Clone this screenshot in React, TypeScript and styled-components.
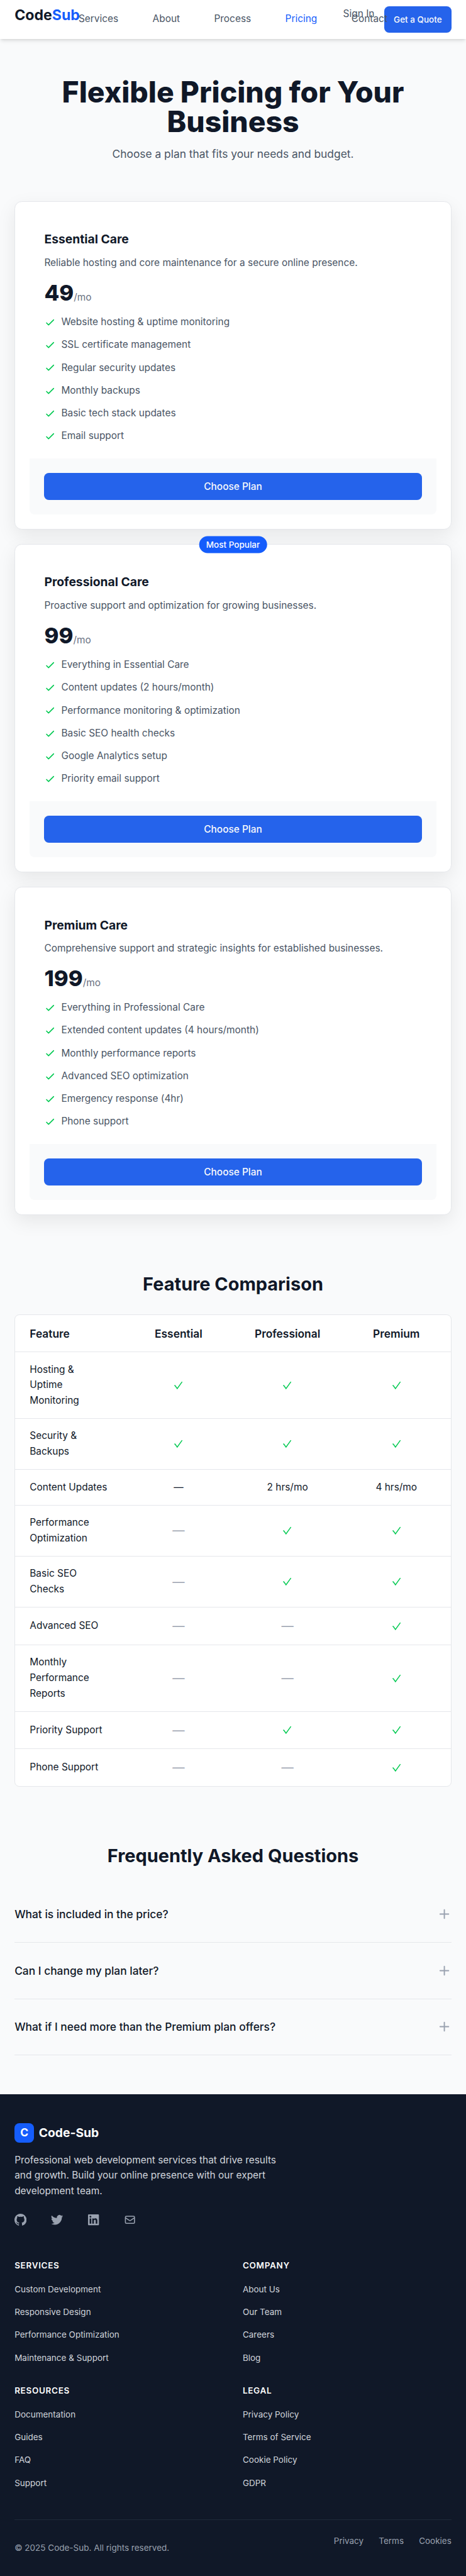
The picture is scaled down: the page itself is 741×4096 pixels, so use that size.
import React from 'react';
import styled, { createGlobalStyle, css } from 'styled-components';

/* Lengths are given on a 16px grid and emitted in rem; the root size scales the page. */
const u = (...n: number[]) => n.map((v) => (v === 0 ? '0' : `${v / 16}rem`)).join(' ');

const color = {
  ink: '#101828',
  body: '#4a5565',
  muted: '#6a7282',
  faint: '#99a1af',
  line: '#e5e7eb',
  page: '#f9fafb',
  brand: '#155dfc',
  button: '#2563eb',
  green: '#00c950',
  footer: '#101828',
  footerText: '#d1d5dc',
  footerLine: '#1e2939',
};

const GlobalStyle = createGlobalStyle`
  html { font-size: 15.432px; }
  *, *::before, *::after { box-sizing: border-box; }
  body {
    margin: 0;
    background: ${color.page};
    color: ${color.ink};
    font-family: Inter, "Liberation Sans", sans-serif;
    line-height: 1.6;
  }
  h1, h2, h3, p, ul { margin: 0; padding: 0; }
  ul { list-style: none; }
  a { color: inherit; text-decoration: none; }
  svg { display: block; flex: none; }
`;

const Page = styled.div`
  display: flex;
  flex-direction: column;
  height: 4096px;
  overflow: hidden;
  font-size: ${u(16)};
`;

const Header = styled.header`
  position: relative;
  display: flex;
  align-items: flex-start;
  flex: none;
  height: ${u(64)};
  padding: ${u(10, 24, 0)};
  background: #fff;
  box-shadow: 0 4px 6px -1px rgba(0, 0, 0, 0.1), 0 2px 4px -2px rgba(0, 0, 0, 0.1);
`;

const Logo = styled.a`
  width: ${u(105.5)};
  font-size: ${u(24)};
  font-weight: 700;
  line-height: ${u(30)};
  white-space: nowrap;
  span { color: ${color.brand}; }
`;

/* The link row is wider than its share of the bar and runs over the actions. */
const Nav = styled.nav`
  position: relative;
  z-index: 1;
  display: flex;
  gap: ${u(56.4)};
  width: ${u(430)};
  margin-top: ${u(9)};
  line-height: ${u(25.6)};
  white-space: nowrap;
`;

const NavLink = styled.a<{ $active?: boolean }>`
  font-size: ${u(16)};
  color: ${(p) => (p.$active ? color.brand : color.body)};
`;

const Actions = styled.div`
  display: flex;
  gap: ${u(16)};
  margin-left: auto;
  white-space: nowrap;
`;

const SignIn = styled.a`
  color: ${color.body};
  font-size: ${u(16)};
  line-height: ${u(25.6)};
`;

const buttonBase = css`
  display: flex;
  align-items: center;
  justify-content: center;
  height: ${u(44)};
  border: 0;
  border-radius: ${u(8)};
  background: ${color.button};
  color: ${color.page};
  font-family: inherit;
  font-weight: 500;
`;

const QuoteButton = styled.button`
  ${buttonBase}
  width: ${u(111)};
  padding: 0;
  font-size: ${u(14)};
`;

const Hero = styled.section`
  flex: none;
  padding: ${u(64, 24)};
  text-align: center;
`;

const HeroTitle = styled.h1`
  font-size: ${u(48)};
  font-weight: 800;
  line-height: 1;
`;

const HeroText = styled.p`
  margin-top: ${u(16)};
  color: ${color.body};
  font-size: ${u(18)};
  line-height: ${u(28)};
`;

const Plans = styled.section`
  display: flex;
  flex-direction: column;
  gap: ${u(24)};
  padding: ${u(0, 24)};
`;

const Card = styled.article`
  position: relative;
  padding: ${u(24)};
  border: 1px solid ${color.line};
  border-radius: ${u(12)};
  background: #fff;
  box-shadow: 0 10px 30px rgba(0, 0, 0, 0.08);
`;

const Badge = styled.span`
  position: absolute;
  top: 0;
  left: 50%;
  transform: translate(-50%, -50%);
  padding: ${u(4, 12)};
  border-radius: ${u(14)};
  background: ${color.brand};
  color: #fff;
  font-size: ${u(14)};
  font-weight: 500;
  line-height: ${u(20)};
  white-space: nowrap;
`;

const CardBody = styled.div`
  padding: ${u(24)};
`;

const PlanName = styled.h3`
  font-size: ${u(20)};
  font-weight: 700;
  line-height: ${u(28)};
`;

const PlanText = styled.p`
  margin-top: ${u(12)};
  color: ${color.body};
`;

const Price = styled.p`
  margin-top: ${u(16)};
  font-size: ${u(36)};
  font-weight: 800;
  line-height: ${u(40)};
  span {
    color: ${color.muted};
    font-size: ${u(16)};
    font-weight: 400;
    line-height: 1;
  }
`;

const Perks = styled.ul`
  display: flex;
  flex-direction: column;
  gap: ${u(12)};
  margin-top: ${u(16)};
`;

const Perk = styled.li`
  display: flex;
  align-items: center;
  gap: ${u(8)};
  color: ${color.body};
  svg { width: ${u(20)}; height: ${u(20)}; color: ${color.green}; }
`;

const CardFooter = styled.div`
  padding: ${u(24)};
  border-radius: ${u(0, 0, 8, 8)};
  background: ${color.page};
`;

const PlanButton = styled.button`
  ${buttonBase}
  width: 100%;
  font-size: ${u(16)};
`;

const Section = styled.section`
  padding: ${u(96, 24, 0)};
`;

const SectionTitle = styled.h2`
  margin-bottom: ${u(32)};
  font-size: ${u(30)};
  font-weight: 700;
  line-height: ${u(36)};
  text-align: center;
`;

const Table = styled.div`
  overflow: hidden;
  border: 1px solid ${color.line};
  border-radius: ${u(8)};
  background: #fff;
`;

const Row = styled.div<{ $head?: boolean }>`
  display: grid;
  grid-template-columns: repeat(4, 1fr);
  align-items: center;
  padding: ${u(16, 0)};
  & + & { border-top: 1px solid ${color.line}; }
  ${(p) => p.$head && css`
    font-size: ${u(18)};
    font-weight: 600;
    line-height: ${u(28)};
  `}
`;

const Cell = styled.div<{ $first?: boolean }>`
  padding: ${u(0, 24)};
  text-align: ${(p) => (p.$first ? 'left' : 'center')};
  white-space: pre-line;
`;

const Mark = styled.span<{ $on?: boolean }>`
  display: flex;
  align-items: center;
  justify-content: center;
  height: ${u(28.8)};
  color: ${(p) => (p.$on ? color.green : color.faint)};
  font-size: ${u(20)};
  svg { width: ${u(20)}; height: ${u(20)}; }
`;

const Question = styled.div`
  display: flex;
  align-items: center;
  justify-content: space-between;
  padding: ${u(32, 0)};
  border-bottom: 1px solid ${color.line};
  font-size: ${u(18)};
  font-weight: 500;
  line-height: ${u(28)};
  svg { width: ${u(24)}; height: ${u(24)}; color: ${color.faint}; }
`;

const Footer = styled.footer`
  flex: 1;
  margin-top: ${u(64)};
  padding: ${u(48, 24, 0)};
  background: ${color.footer};
  color: ${color.footerText};
`;

const FooterBrand = styled.div`
  display: flex;
  align-items: center;
  gap: ${u(8)};
  color: #fff;
  font-size: ${u(20)};
  font-weight: 700;
  line-height: ${u(32)};
`;

const BrandMark = styled.span`
  width: ${u(32)};
  height: ${u(32)};
  border-radius: ${u(8)};
  background: ${color.brand};
  font-size: ${u(18)};
  line-height: ${u(31)};
  text-align: center;
`;

const FooterText = styled.p`
  max-width: ${u(448)};
  margin-top: ${u(16)};
`;

const Social = styled.div`
  display: flex;
  gap: ${u(40)};
  margin-top: ${u(24)};
  color: ${color.faint};
  svg { width: ${u(20)}; height: ${u(20)}; }
`;

const LinkGrid = styled.div`
  display: grid;
  grid-template-columns: 1fr 1fr;
  gap: ${u(32)};
  margin-top: ${u(56)};
`;

const GroupTitle = styled.h3`
  margin-bottom: ${u(16)};
  color: #fff;
  font-size: ${u(14)};
  font-weight: 600;
  letter-spacing: 0.05em;
  line-height: ${u(20)};
  text-transform: uppercase;
`;

const GroupLinks = styled.ul`
  display: flex;
  flex-direction: column;
  gap: ${u(12)};
  a { font-size: ${u(14)}; }
`;

const Legal = styled.div`
  display: flex;
  justify-content: space-between;
  margin-top: ${u(48)};
  padding-top: ${u(24)};
  border-top: 1px solid ${color.footerLine};
  color: ${color.faint};
  font-size: ${u(14)};
  line-height: ${u(20)};
`;

const Copyright = styled.p`
  margin-top: ${u(12)};
`;

const LegalLinks = styled.div`
  display: flex;
  gap: ${u(25)};
`;

const CheckIcon = () => (
  <svg viewBox="0 0 24 24" fill="none" stroke="currentColor" strokeWidth="2" strokeLinecap="round" strokeLinejoin="round">
    <path d="M5 13l4 4L19 7" />
  </svg>
);

const TickIcon = () => (
  <svg viewBox="0 0 20 20" fill="none" stroke="currentColor" strokeWidth="1.5">
    <path d="M3.4 10.4L4.6 10.6L8.1 15.5L16.2 4.2" />
  </svg>
);

const PlusIcon = () => (
  <svg viewBox="0 0 24 24" fill="none" stroke="currentColor" strokeWidth="2" strokeLinecap="round">
    <path d="M12 5v14M5 12h14" />
  </svg>
);

const GithubIcon = () => (
  <svg viewBox="0 0 20 20" fill="currentColor">
    <path fillRule="evenodd" clipRule="evenodd" d="M10 0C4.477 0 0 4.484 0 10.017c0 4.425 2.865 8.18 6.839 9.504.5.092.682-.217.682-.483 0-.237-.008-.868-.013-1.703-2.782.605-3.369-1.343-3.369-1.343-.454-1.158-1.11-1.466-1.11-1.466-.908-.62.069-.608.069-.608 1.003.07 1.531 1.032 1.531 1.032.892 1.53 2.341 1.088 2.91.832.092-.647.35-1.088.636-1.338-2.22-.253-4.555-1.113-4.555-4.951 0-1.093.39-1.988 1.029-2.688-.103-.253-.446-1.272.098-2.65 0 0 .84-.27 2.75 1.026A9.564 9.564 0 0110 4.844c.85.004 1.705.115 2.504.337 1.909-1.296 2.747-1.027 2.747-1.027.546 1.379.203 2.398.1 2.651.64.7 1.028 1.595 1.028 2.688 0 3.848-2.339 4.695-4.566 4.942.359.31.678.921.678 1.856 0 1.338-.012 2.419-.012 2.747 0 .268.18.58.688.482A10.019 10.019 0 0020 10.017C20 4.484 15.522 0 10 0z" />
  </svg>
);

const TwitterIcon = () => (
  <svg viewBox="0 0 20 20" fill="currentColor">
    <path d="M6.29 18.251c7.547 0 11.675-6.253 11.675-11.675 0-.178 0-.355-.012-.53A8.348 8.348 0 0020 3.92a8.19 8.19 0 01-2.357.646 4.118 4.118 0 001.804-2.27 8.224 8.224 0 01-2.605.996 4.107 4.107 0 00-6.993 3.743 11.65 11.65 0 01-8.457-4.287 4.106 4.106 0 001.27 5.477A4.073 4.073 0 01.8 7.713v.052a4.105 4.105 0 003.292 4.022 4.095 4.095 0 01-1.853.07 4.108 4.108 0 003.834 2.85A8.233 8.233 0 010 16.407a11.616 11.616 0 006.29 1.84" />
  </svg>
);

const LinkedinIcon = () => (
  <svg viewBox="0 0 20 20" fill="currentColor">
    <path fillRule="evenodd" clipRule="evenodd" d="M16.338 16.338H13.67V12.16c0-.995-.017-2.277-1.387-2.277-1.39 0-1.601 1.086-1.601 2.207v4.248H8.014v-8.59h2.559v1.174h.037c.356-.675 1.227-1.387 2.526-1.387 2.703 0 3.203 1.778 3.203 4.092v4.711zM5.005 6.575a1.548 1.548 0 11-.003-3.096 1.548 1.548 0 01.003 3.096zm-1.337 9.763H6.34v-8.59H3.667v8.59zM17.668 1H2.328C1.595 1 1 1.581 1 2.298v15.403C1 18.418 1.595 19 2.328 19h15.34c.734 0 1.332-.582 1.332-1.299V2.298C19 1.581 18.402 1 17.668 1z" />
  </svg>
);

const MailIcon = () => (
  <svg viewBox="0 0 24 24" fill="none" stroke="currentColor" strokeWidth="2" strokeLinecap="round" strokeLinejoin="round">
    <path d="M3 8l7.89 5.26a2 2 0 002.22 0L21 8M5 19h14a2 2 0 002-2V7a2 2 0 00-2-2H5a2 2 0 00-2 2v10a2 2 0 002 2z" />
  </svg>
);

const plans = [
  {
    name: 'Essential Care',
    text: 'Reliable hosting and core maintenance for a secure online presence.',
    price: 49,
    perks: ['Website hosting & uptime monitoring', 'SSL certificate management', 'Regular security updates', 'Monthly backups', 'Basic tech stack updates', 'Email support'],
  },
  {
    name: 'Professional Care',
    text: 'Proactive support and optimization for growing businesses.',
    price: 99,
    popular: true,
    perks: ['Everything in Essential Care', 'Content updates (2 hours/month)', 'Performance monitoring & optimization', 'Basic SEO health checks', 'Google Analytics setup', 'Priority email support'],
  },
  {
    name: 'Premium Care',
    text: 'Comprehensive support and strategic insights for established businesses.',
    price: 199,
    perks: ['Everything in Professional Care', 'Extended content updates (4 hours/month)', 'Monthly performance reports', 'Advanced SEO optimization', 'Emergency response (4hr)', 'Phone support'],
  },
];

const features: [string, ...(boolean | string)[]][] = [
  ['Hosting &\nUptime\nMonitoring', true, true, true],
  ['Security &\nBackups', true, true, true],
  ['Content Updates', '—', '2 hrs/mo', '4 hrs/mo'],
  ['Performance\nOptimization', false, true, true],
  ['Basic SEO\nChecks', false, true, true],
  ['Advanced SEO', false, false, true],
  ['Monthly\nPerformance\nReports', false, false, true],
  ['Priority Support', false, true, true],
  ['Phone Support', false, false, true],
];

const questions = ['What is included in the price?', 'Can I change my plan later?', 'What if I need more than the Premium plan offers?'];

const groups = [
  { title: 'Services', links: ['Custom Development', 'Responsive Design', 'Performance Optimization', 'Maintenance & Support'] },
  { title: 'Company', links: ['About Us', 'Our Team', 'Careers', 'Blog'] },
  { title: 'Resources', links: ['Documentation', 'Guides', 'FAQ', 'Support'] },
  { title: 'Legal', links: ['Privacy Policy', 'Terms of Service', 'Cookie Policy', 'GDPR'] },
];

export default function App() {
  return (
    <Page>
      <GlobalStyle />
      <Header>
        <Logo>Code<span>Sub</span></Logo>
        <Nav>
          {['Services', 'About', 'Process', 'Pricing', 'Contact'].map((t) => (
            <NavLink key={t} $active={t === 'Pricing'}>{t}</NavLink>
          ))}
        </Nav>
        <Actions>
          <SignIn>Sign In</SignIn>
          <QuoteButton>Get a Quote</QuoteButton>
        </Actions>
      </Header>

      <Hero>
        <HeroTitle>Flexible Pricing for Your Business</HeroTitle>
        <HeroText>Choose a plan that fits your needs and budget.</HeroText>
      </Hero>

      <Plans>
        {plans.map((plan) => (
          <Card key={plan.name}>
            {plan.popular && <Badge>Most Popular</Badge>}
            <CardBody>
              <PlanName>{plan.name}</PlanName>
              <PlanText>{plan.text}</PlanText>
              <Price>{plan.price}<span>/mo</span></Price>
              <Perks>
                {plan.perks.map((perk) => (
                  <Perk key={perk}><CheckIcon />{perk}</Perk>
                ))}
              </Perks>
            </CardBody>
            <CardFooter><PlanButton>Choose Plan</PlanButton></CardFooter>
          </Card>
        ))}
      </Plans>

      <Section>
        <SectionTitle>Feature Comparison</SectionTitle>
        <Table>
          <Row $head>
            <Cell $first>Feature</Cell>
            <Cell>Essential</Cell>
            <Cell>Professional</Cell>
            <Cell>Premium</Cell>
          </Row>
          {features.map(([name, ...values]) => (
            <Row key={name}>
              <Cell $first>{name}</Cell>
              {values.map((v, i) => (
                <Cell key={i}>
                  {typeof v === 'string' ? v : <Mark $on={v}>{v ? <TickIcon /> : '—'}</Mark>}
                </Cell>
              ))}
            </Row>
          ))}
        </Table>
      </Section>

      <Section>
        <SectionTitle>Frequently Asked Questions</SectionTitle>
        {questions.map((q) => (
          <Question key={q}>{q}<PlusIcon /></Question>
        ))}
      </Section>

      <Footer>
        <FooterBrand><BrandMark>C</BrandMark>Code-Sub</FooterBrand>
        <FooterText>
          Professional web development services that drive results and growth. Build your online presence with our expert development team.
        </FooterText>
        <Social><GithubIcon /><TwitterIcon /><LinkedinIcon /><MailIcon /></Social>
        <LinkGrid>
          {groups.map((g) => (
            <div key={g.title}>
              <GroupTitle>{g.title}</GroupTitle>
              <GroupLinks>
                {g.links.map((l) => <li key={l}><a>{l}</a></li>)}
              </GroupLinks>
            </div>
          ))}
        </LinkGrid>
        <Legal>
          <Copyright>© 2025 Code-Sub. All rights reserved.</Copyright>
          <LegalLinks><a>Privacy</a><a>Terms</a><a>Cookies</a></LegalLinks>
        </Legal>
      </Footer>
    </Page>
  );
}
